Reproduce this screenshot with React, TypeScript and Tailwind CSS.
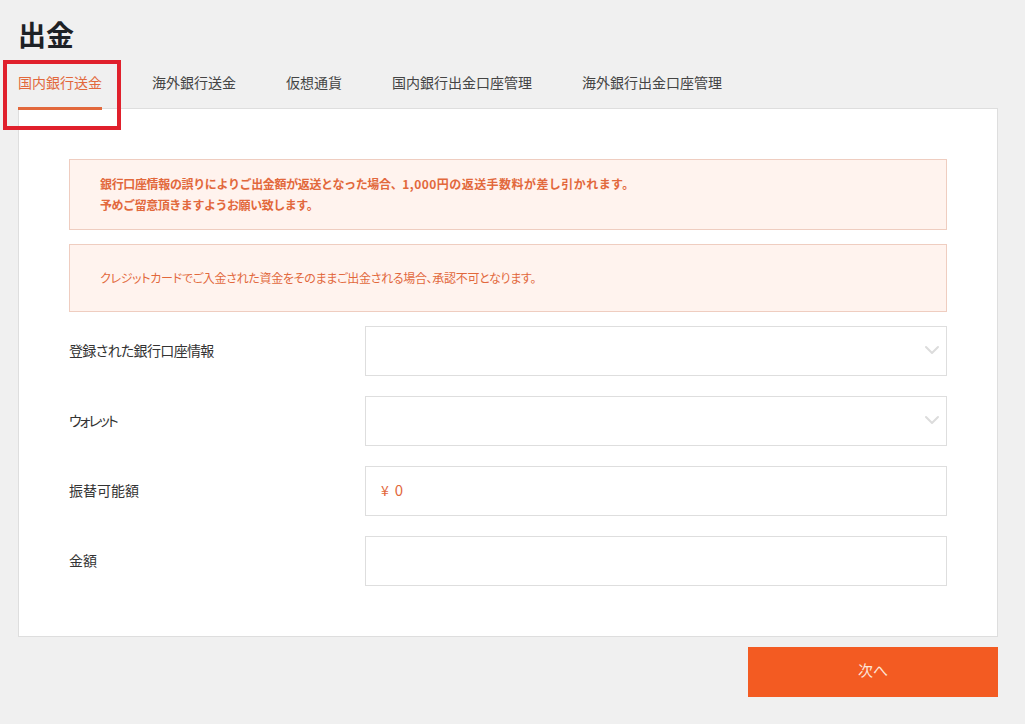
import { ChevronDown } from 'lucide-react';

const tabs = ['国内銀行送金', '海外銀行送金', '仮想通貨', '国内銀行出金口座管理', '海外銀行出金口座管理'];

function Row({ label, labelClass, children }: { label: string; labelClass?: string; children: React.ReactNode }) {
  return (
    <div className="flex items-center">
      <div className={`w-[296px] pb-[2px] text-sm text-[#333] [font-feature-settings:'palt'] ${labelClass ?? ''}`}>{label}</div>
      <div className="relative flex h-[50px] flex-1 items-center border border-[#dedede] bg-white px-[15px] pb-[2px] text-sm">
        {children}
      </div>
    </div>
  );
}

export default function App() {
  return (
    <div
      className="relative h-[724px] overflow-hidden bg-[#f0f0f0] px-[18px] pt-[16px]"
      style={{ fontFamily: '"Noto Sans CJK JP", "Liberation Sans", sans-serif' }}
    >
      <h1 className="h-[36px] text-[28px] leading-[36px] font-bold text-[#1d2125]">出金</h1>

      {/* Tabs */}
      <div className="mt-[4px] flex h-[52px] gap-[50px]">
        {tabs.map((t, i) => (
          <div
            key={t}
            className={
              i === 0
                ? 'relative z-10 h-[54px] border-b-[3px] border-[#e2683c] pt-[14px] text-sm leading-[24px] text-[#e2683c]'
                : 'h-[52px] pt-[14px] text-sm leading-[24px] text-[#444]'
            }
          >
            {t}
          </div>
        ))}
      </div>

      {/* Card */}
      <div className="h-[529px] w-[980px] border border-[#dedede] bg-white px-[50px] pt-[50px]">
        <div className="flex h-[71px] flex-col justify-center border border-[#efcdc0] bg-[#fff3ee] pb-[2px] pl-[30px] text-xs leading-[21px] font-bold tracking-[-0.35px] text-[#e2683c]">
          <p>
            銀行口座情報の誤りによりご出金額が返送となった場合、
            <span className="tracking-[0.45px]">1,000円の返送手数料が差し引かれます。</span>
          </p>
          <p className="tracking-[-0.45px]">予めご留意頂きますようお願い致します。</p>
        </div>
        <div className="mt-[14px] flex h-[68px] items-center border border-[#efcdc0] bg-[#fff3ee] pl-[30px] text-xs tracking-[-0.3px] text-[#e2683c] [font-feature-settings:'palt']">
          クレジットカードでご入金された資金をそのままご出金される場合、承認不可となります。
        </div>

        <div className="mt-[14px] flex flex-col gap-[20px]">
          <Row label="登録された銀行口座情報" labelClass="tracking-[-0.65px]">
            <ChevronDown className="absolute right-[2px] h-6 w-6 text-[#dcdcdc]" strokeWidth={2} />
          </Row>
          <Row label="ウォレット" labelClass="tracking-[-2px]">
            <ChevronDown className="absolute right-[2px] h-6 w-6 text-[#dcdcdc]" strokeWidth={2} />
          </Row>
          <Row label="振替可能額">
            <span className="text-[#e2683c]">
              ¥<span className="ml-[6px] text-[15px]">0</span>
            </span>
          </Row>
          <Row label="金額">
            <span />
          </Row>
        </div>
      </div>

      <div className="mt-[10px] flex w-[980px] justify-end">
        <button className="h-[50px] w-[250px] bg-[#f35b22] pb-[3px] text-[15px] text-[#fde6da]">次へ</button>
      </div>

      {/* Red annotation box */}
      <div className="absolute top-[60px] left-[3px] z-20 h-[70px] w-[118px] border-[4px] border-[#e0202c]" />
    </div>
  );
}
